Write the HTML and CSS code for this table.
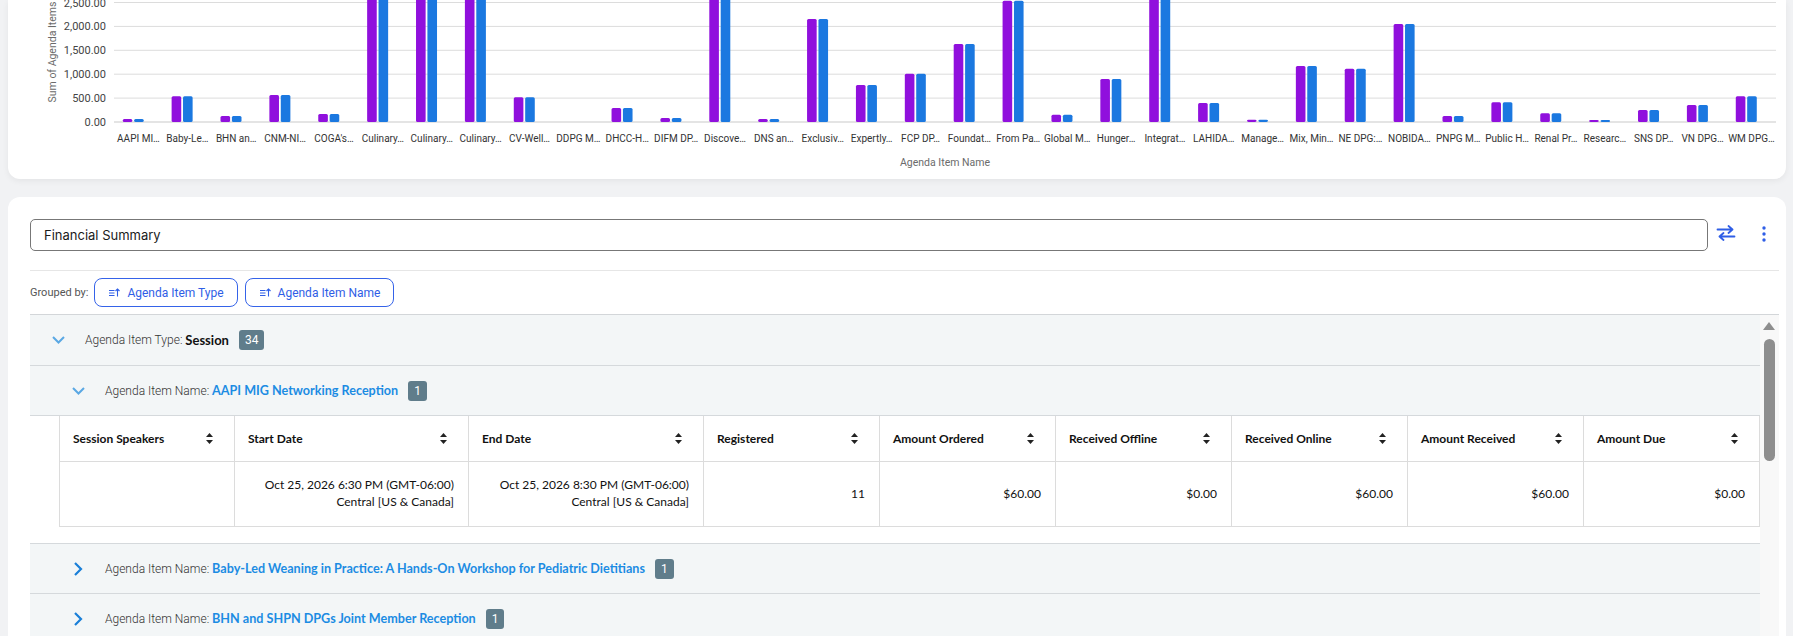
FILE: index.html
```html
<!DOCTYPE html>
<html lang="en">
<head>
<meta charset="utf-8">
<title>Financial Summary</title>
<link rel="stylesheet" href="styles.css">
</head>
<body>
<div class="chart-card">
  <svg class="chart" width="1778" height="179" viewBox="8 0 1778 179">
    <g class="grid-lines">
      <line x1="114" x2="1776" y1="2.5" y2="2.5"/>
      <line x1="114" x2="1776" y1="26.4" y2="26.4"/>
      <line x1="114" x2="1776" y1="50.3" y2="50.3"/>
      <line x1="114" x2="1776" y1="74.2" y2="74.2"/>
      <line x1="114" x2="1776" y1="98.1" y2="98.1"/>
      <line class="base" x1="114" x2="1776" y1="122" y2="122"/>
    </g>
    <g class="y-labels">
      <text x="106" y="6.5">2,500.00</text>
      <text x="106" y="30.4">2,000.00</text>
      <text x="106" y="54.3">1,500.00</text>
      <text x="106" y="78.2">1,000.00</text>
      <text x="106" y="102.1">500.00</text>
      <text x="106" y="126">0.00</text>
    </g>
    <text class="axis-title" transform="translate(56 52) rotate(-90)">Sum of Agenda Items</text>
    <text class="axis-title" x="945" y="165.5">Agenda Item Name</text>
    <g class="cats">
      <g transform="translate(138.44 0)"><rect class="b1" x="-15.7" y="119" width="9.6" height="3"/><rect class="b2" x="-4.3" y="119" width="9.6" height="3"/><text y="141.5">AAPI MI…</text></g>
      <g transform="translate(187.32 0)"><rect class="b1" x="-15.7" y="96.3" width="9.6" height="25.7"/><rect class="b2" x="-4.3" y="96.3" width="9.6" height="25.7"/><text y="141.5">Baby-Le…</text></g>
      <g transform="translate(236.20 0)"><rect class="b1" x="-15.7" y="116" width="9.6" height="6"/><rect class="b2" x="-4.3" y="116" width="9.6" height="6"/><text y="141.5">BHN an…</text></g>
      <g transform="translate(285.08 0)"><rect class="b1" x="-15.7" y="95" width="9.6" height="27"/><rect class="b2" x="-4.3" y="95" width="9.6" height="27"/><text y="141.5">CNM-NI…</text></g>
      <g transform="translate(333.96 0)"><rect class="b1" x="-15.7" y="114" width="9.6" height="8"/><rect class="b2" x="-4.3" y="114" width="9.6" height="8"/><text y="141.5">COGA's…</text></g>
      <g transform="translate(382.84 0)"><rect class="b1" x="-15.7" y="-10" width="9.6" height="132"/><rect class="b2" x="-4.3" y="-10" width="9.6" height="132"/><text y="141.5">Culinary…</text></g>
      <g transform="translate(431.72 0)"><rect class="b1" x="-15.7" y="-10" width="9.6" height="132"/><rect class="b2" x="-4.3" y="-10" width="9.6" height="132"/><text y="141.5">Culinary…</text></g>
      <g transform="translate(480.60 0)"><rect class="b1" x="-15.7" y="-10" width="9.6" height="132"/><rect class="b2" x="-4.3" y="-10" width="9.6" height="132"/><text y="141.5">Culinary…</text></g>
      <g transform="translate(529.48 0)"><rect class="b1" x="-15.7" y="97.3" width="9.6" height="24.7"/><rect class="b2" x="-4.3" y="97.3" width="9.6" height="24.7"/><text y="141.5">CV-Well…</text></g>
      <g transform="translate(578.36 0)"><text y="141.5">DDPG M…</text></g>
      <g transform="translate(627.24 0)"><rect class="b1" x="-15.7" y="108" width="9.6" height="14"/><rect class="b2" x="-4.3" y="108" width="9.6" height="14"/><text y="141.5">DHCC-H…</text></g>
      <g transform="translate(676.12 0)"><rect class="b1" x="-15.7" y="118" width="9.6" height="4"/><rect class="b2" x="-4.3" y="118" width="9.6" height="4"/><text y="141.5">DIFM DP…</text></g>
      <g transform="translate(725.00 0)"><rect class="b1" x="-15.7" y="-10" width="9.6" height="132"/><rect class="b2" x="-4.3" y="-10" width="9.6" height="132"/><text y="141.5">Discove…</text></g>
      <g transform="translate(773.88 0)"><rect class="b1" x="-15.7" y="119" width="9.6" height="3"/><rect class="b2" x="-4.3" y="119" width="9.6" height="3"/><text y="141.5">DNS an…</text></g>
      <g transform="translate(822.76 0)"><rect class="b1" x="-15.7" y="19" width="9.6" height="103"/><rect class="b2" x="-4.3" y="19" width="9.6" height="103"/><text y="141.5">Exclusiv…</text></g>
      <g transform="translate(871.64 0)"><rect class="b1" x="-15.7" y="85" width="9.6" height="37"/><rect class="b2" x="-4.3" y="85" width="9.6" height="37"/><text y="141.5">Expertly…</text></g>
      <g transform="translate(920.52 0)"><rect class="b1" x="-15.7" y="73.7" width="9.6" height="48.3"/><rect class="b2" x="-4.3" y="73.7" width="9.6" height="48.3"/><text y="141.5">FCP DP…</text></g>
      <g transform="translate(969.40 0)"><rect class="b1" x="-15.7" y="44" width="9.6" height="78"/><rect class="b2" x="-4.3" y="44" width="9.6" height="78"/><text y="141.5">Foundat…</text></g>
      <g transform="translate(1018.28 0)"><rect class="b1" x="-15.7" y="0.7" width="9.6" height="121.3"/><rect class="b2" x="-4.3" y="0.7" width="9.6" height="121.3"/><text y="141.5">From Pa…</text></g>
      <g transform="translate(1067.16 0)"><rect class="b1" x="-15.7" y="114.7" width="9.6" height="7.3"/><rect class="b2" x="-4.3" y="114.7" width="9.6" height="7.3"/><text y="141.5">Global M…</text></g>
      <g transform="translate(1116.04 0)"><rect class="b1" x="-15.7" y="79" width="9.6" height="43"/><rect class="b2" x="-4.3" y="79" width="9.6" height="43"/><text y="141.5">Hunger…</text></g>
      <g transform="translate(1164.92 0)"><rect class="b1" x="-15.7" y="-10" width="9.6" height="132"/><rect class="b2" x="-4.3" y="-10" width="9.6" height="132"/><text y="141.5">Integrat…</text></g>
      <g transform="translate(1213.80 0)"><rect class="b1" x="-15.7" y="103" width="9.6" height="19"/><rect class="b2" x="-4.3" y="103" width="9.6" height="19"/><text y="141.5">LAHIDA…</text></g>
      <g transform="translate(1262.68 0)"><rect class="b1" x="-15.7" y="119.7" width="9.6" height="2.3"/><rect class="b2" x="-4.3" y="119.7" width="9.6" height="2.3"/><text y="141.5">Manage…</text></g>
      <g transform="translate(1311.56 0)"><rect class="b1" x="-15.7" y="66" width="9.6" height="56"/><rect class="b2" x="-4.3" y="66" width="9.6" height="56"/><text y="141.5">Mix, Min…</text></g>
      <g transform="translate(1360.44 0)"><rect class="b1" x="-15.7" y="68.7" width="9.6" height="53.3"/><rect class="b2" x="-4.3" y="68.7" width="9.6" height="53.3"/><text y="141.5">NE DPG:…</text></g>
      <g transform="translate(1409.32 0)"><rect class="b1" x="-15.7" y="24" width="9.6" height="98"/><rect class="b2" x="-4.3" y="24" width="9.6" height="98"/><text y="141.5">NOBIDA…</text></g>
      <g transform="translate(1458.20 0)"><rect class="b1" x="-15.7" y="116" width="9.6" height="6"/><rect class="b2" x="-4.3" y="116" width="9.6" height="6"/><text y="141.5">PNPG M…</text></g>
      <g transform="translate(1507.08 0)"><rect class="b1" x="-15.7" y="102.3" width="9.6" height="19.7"/><rect class="b2" x="-4.3" y="102.3" width="9.6" height="19.7"/><text y="141.5">Public H…</text></g>
      <g transform="translate(1555.96 0)"><rect class="b1" x="-15.7" y="113.3" width="9.6" height="8.7"/><rect class="b2" x="-4.3" y="113.3" width="9.6" height="8.7"/><text y="141.5">Renal Pr…</text></g>
      <g transform="translate(1604.84 0)"><rect class="b1" x="-15.7" y="120" width="9.6" height="2"/><rect class="b2" x="-4.3" y="120" width="9.6" height="2"/><text y="141.5">Researc…</text></g>
      <g transform="translate(1653.72 0)"><rect class="b1" x="-15.7" y="110" width="9.6" height="12"/><rect class="b2" x="-4.3" y="110" width="9.6" height="12"/><text y="141.5">SNS DP…</text></g>
      <g transform="translate(1702.60 0)"><rect class="b1" x="-15.7" y="105" width="9.6" height="17"/><rect class="b2" x="-4.3" y="105" width="9.6" height="17"/><text y="141.5">VN DPG…</text></g>
      <g transform="translate(1751.48 0)"><rect class="b1" x="-15.7" y="96.3" width="9.6" height="25.7"/><rect class="b2" x="-4.3" y="96.3" width="9.6" height="25.7"/><text y="141.5">WM DPG…</text></g>
    </g>
  </svg>
</div>

<div class="report-card">
  <div class="toolbar">
    <div class="title-input">Financial Summary</div>
    <button class="icon-btn swap" type="button" aria-label="Swap">
      <svg width="20" height="16" viewBox="0 0 20 16"><path d="M1.5 4.5h15M12.5 1l4 3.5-4 3.5M18.5 11.5h-15M7.5 8l-4 3.5 4 3.5" fill="none" stroke="#2f5ee6" stroke-width="1.8" stroke-linecap="round" stroke-linejoin="round"/></svg>
    </button>
    <button class="icon-btn kebab" type="button" aria-label="More">
      <svg width="4" height="16" viewBox="0 0 4 16"><circle cx="2" cy="2" r="1.7"/><circle cx="2" cy="8" r="1.7"/><circle cx="2" cy="14" r="1.7"/></svg>
    </button>
  </div>
  <div class="divider"></div>
  <div class="grouped">
    <span class="grouped-label">Grouped by:</span>
    <span class="chip"><svg class="chip-icon" width="11" height="9" viewBox="0 0 11 9"><path d="M0 2.5h5.5M0 5h5.5M0 7.5h5.5M8.5 8.5V1M6.5 3l2-2 2 2" fill="none" stroke="#2f5ee6" stroke-width="1.1"/></svg>Agenda Item Type</span>
    <span class="chip"><svg class="chip-icon" width="11" height="9" viewBox="0 0 11 9"><path d="M0 2.5h5.5M0 5h5.5M0 7.5h5.5M8.5 8.5V1M6.5 3l2-2 2 2" fill="none" stroke="#2f5ee6" stroke-width="1.1"/></svg>Agenda Item Name</span>
  </div>

  <div class="grid">
    <div class="rows">
      <div class="grp lvl1">
        <svg class="chev" width="13" height="8" viewBox="0 0 13 8"><path d="M1 1l5.5 5.5L12 1" fill="none" stroke="#5aa8e4" stroke-width="2"/></svg>
        <span class="grp-label">Agenda Item Type: </span><span class="grp-value">Session</span>
        <span class="badge">34</span>
      </div>
      <div class="grp lvl2">
        <svg class="chev" width="13" height="8" viewBox="0 0 13 8"><path d="M1 1l5.5 5.5L12 1" fill="none" stroke="#5aa8e4" stroke-width="2"/></svg>
        <span class="grp-label">Agenda Item Name: </span><span class="grp-link">AAPI MIG Networking Reception</span>
        <span class="badge">1</span>
      </div>
      <table class="data">
        <colgroup>
          <col class="c-s"><col class="c-w"><col class="c-w2"><col class="c-n"><col class="c-n"><col class="c-n"><col class="c-n"><col class="c-n"><col class="c-n">
        </colgroup>
        <thead>
          <tr>
            <th><div class="th-in"><span>Session Speakers</span><svg width="7" height="11" viewBox="0 0 7 11"><path d="M3.5 0L7 4H0z M0 7h7L3.5 11z"/></svg></div></th>
            <th><div class="th-in"><span>Start Date</span><svg width="7" height="11" viewBox="0 0 7 11"><path d="M3.5 0L7 4H0z M0 7h7L3.5 11z"/></svg></div></th>
            <th><div class="th-in"><span>End Date</span><svg width="7" height="11" viewBox="0 0 7 11"><path d="M3.5 0L7 4H0z M0 7h7L3.5 11z"/></svg></div></th>
            <th><div class="th-in"><span>Registered</span><svg width="7" height="11" viewBox="0 0 7 11"><path d="M3.5 0L7 4H0z M0 7h7L3.5 11z"/></svg></div></th>
            <th><div class="th-in"><span>Amount Ordered</span><svg width="7" height="11" viewBox="0 0 7 11"><path d="M3.5 0L7 4H0z M0 7h7L3.5 11z"/></svg></div></th>
            <th><div class="th-in"><span>Received Offline</span><svg width="7" height="11" viewBox="0 0 7 11"><path d="M3.5 0L7 4H0z M0 7h7L3.5 11z"/></svg></div></th>
            <th><div class="th-in"><span>Received Online</span><svg width="7" height="11" viewBox="0 0 7 11"><path d="M3.5 0L7 4H0z M0 7h7L3.5 11z"/></svg></div></th>
            <th><div class="th-in"><span>Amount Received</span><svg width="7" height="11" viewBox="0 0 7 11"><path d="M3.5 0L7 4H0z M0 7h7L3.5 11z"/></svg></div></th>
            <th><div class="th-in"><span>Amount Due</span><svg width="7" height="11" viewBox="0 0 7 11"><path d="M3.5 0L7 4H0z M0 7h7L3.5 11z"/></svg></div></th>
          </tr>
        </thead>
        <tbody>
          <tr>
            <td></td>
            <td>Oct 25, 2026 6:30 PM (GMT-06:00)<br>Central [US &amp; Canada]</td>
            <td>Oct 25, 2026 8:30 PM (GMT-06:00)<br>Central [US &amp; Canada]</td>
            <td>11</td>
            <td>$60.00</td>
            <td>$0.00</td>
            <td>$60.00</td>
            <td>$60.00</td>
            <td>$0.00</td>
          </tr>
        </tbody>
      </table>
      <div class="grp lvl2 collapsed first">
        <svg class="chev" width="13" height="14" viewBox="0 0 13 14"><path d="M3 1l6 6-6 6" fill="none" stroke="#1a7fd8" stroke-width="2.2"/></svg>
        <span class="grp-label">Agenda Item Name: </span><span class="grp-link">Baby-Led Weaning in Practice: A Hands-On Workshop for Pediatric Dietitians</span>
        <span class="badge">1</span>
      </div>
      <div class="grp lvl2 collapsed">
        <svg class="chev" width="13" height="14" viewBox="0 0 13 14"><path d="M3 1l6 6-6 6" fill="none" stroke="#1a7fd8" stroke-width="2.2"/></svg>
        <span class="grp-label">Agenda Item Name: </span><span class="grp-link">BHN and SHPN DPGs Joint Member Reception</span>
        <span class="badge">1</span>
      </div>
      <div class="grp lvl2 collapsed">
        <svg class="chev" width="13" height="14" viewBox="0 0 13 14"><path d="M3 1l6 6-6 6" fill="none" stroke="#1a7fd8" stroke-width="2.2"/></svg>
        <span class="grp-label">Agenda Item Name: </span><span class="grp-link">CNM-NIDPG Networking Reception</span>
        <span class="badge">1</span>
      </div>
    </div>
    <div class="scrollbar">
      <span class="sb-up"></span>
      <span class="sb-thumb"></span>
    </div>
  </div>
</div>
</body>
</html>
```

FILE: styles.css
```css
html, body {
  margin: 0;
  height: 636px;
  overflow: hidden;
}

body {
  background: #f1f2f4;
  font-family: Roboto, "Liberation Sans", Arial, sans-serif;
  color: #222;
}

/* ---------- chart card ---------- */
.chart-card {
  margin: 0 7px 0 8px;
  height: 179px;
  background: #fff;
  border-radius: 0 0 12px 12px;
  box-shadow: 0 2px 6px rgba(0, 0, 0, 0.06);
  overflow: hidden;
}

.chart {
  display: block;
}

.grid-lines line {
  stroke: #dcdcdc;
  stroke-width: 1;
}

.grid-lines line.base {
  stroke: #c9c9c9;
}

.y-labels text {
  font-family: Roboto, "Liberation Sans", sans-serif;
  font-size: 11px;
  fill: #444;
  text-anchor: end;
}

.axis-title {
  font-family: Roboto, "Liberation Sans", sans-serif;
  font-size: 10.5px;
  fill: #6b6b6b;
  text-anchor: middle;
}

.cats text {
  font-family: Roboto, "Liberation Sans", sans-serif;
  font-size: 10px;
  fill: #333;
  text-anchor: middle;
}

.b1 {
  fill: #9010dd;
  rx: 1.5px;
}

.b2 {
  fill: #1b78e0;
  rx: 1.5px;
}

/* ---------- report card ---------- */
.report-card {
  margin: 18px 7px 0 8px;
  background: #fff;
  border-radius: 12px 12px 0 0;
  padding: 22px 7px 0 22px;
  height: 600px;
}

.toolbar {
  display: flex;
  align-items: center;
  height: 32px;
}

.title-input {
  flex: 1;
  height: 32px;
  box-sizing: border-box;
  border: 1px solid #777;
  border-radius: 5px;
  padding-left: 13px;
  font-family: Inter, Roboto, sans-serif;
  font-size: 13px;
  line-height: 30px;
  color: #1b1b1b;
}

.icon-btn {
  border: none;
  background: none;
  padding: 0;
  height: 32px;
  display: flex;
  align-items: center;
  justify-content: center;
  cursor: pointer;
}

.swap {
  width: 36px;
}

.swap svg {
  margin-top: -5px;
}

.kebab {
  width: 30px;
  margin-left: 5px;
}

.kebab svg {
  fill: #2f5ee6;
  margin-top: -3px;
}

.divider {
  margin-top: 19px;
  height: 1px;
  background: #e6e6e6;
}

.grouped {
  display: flex;
  align-items: center;
  gap: 7px;
  margin-top: 7px;
  height: 29px;
}

.grouped-label {
  font-size: 11px;
  color: #555;
  margin-right: -1px;
}

.chip {
  display: flex;
  align-items: center;
  gap: 7px;
  height: 29px;
  box-sizing: border-box;
  border: 1px solid #3563e9;
  border-radius: 8px;
  padding: 0 13px 0 14px;
  font-size: 12px;
  color: #2f5ee6;
}

.chip-icon {
  display: block;
}

/* ---------- grouped grid ---------- */
.grid {
  margin-top: 7px;
  border-top: 1px solid #d3d6d9;
  display: flex;
  height: 400px;
}

.rows {
  flex: 1;
  min-width: 0;
}

.scrollbar {
  width: 19px;
  background: #f8f8f8;
  position: relative;
}

.sb-up {
  position: absolute;
  left: 3px;
  top: 7px;
  width: 0;
  height: 0;
  border-left: 6.5px solid transparent;
  border-right: 6.5px solid transparent;
  border-bottom: 8px solid #8e8e8e;
}

.sb-thumb {
  position: absolute;
  left: 4px;
  top: 24px;
  width: 11px;
  height: 122px;
  border-radius: 6px;
  background: #8e8e8e;
}

.grp {
  display: flex;
  align-items: center;
  height: 49px;
  background: #f3f6f7;
  border-bottom: 1px solid #d5d9dc;
  font-size: 12px;
  white-space: nowrap;
}

.grp.lvl1 {
  height: 50px;
}

.grp .chev {
  display: block;
  flex: none;
  margin-right: 20px;
}

.lvl1 {
  padding-left: 22px;
}

.lvl2 {
  padding-left: 42px;
}

.collapsed.first {
  margin-top: 16px;
  border-top: 1px solid #d5d9dc;
}

.grp-label {
  font-weight: 300;
  color: #333;
  white-space: pre;
}

.grp-value {
  font-family: Lato, Roboto, sans-serif;
  font-weight: 700;
  font-size: 13px;
  color: #111;
}

.grp-link {
  font-family: Lato, Roboto, sans-serif;
  font-weight: 700;
  font-size: 12.6px;
  color: #1c8ce3;
}

.badge {
  display: inline-block;
  margin-left: 10px;
  height: 20px;
  line-height: 20px;
  padding: 0 6px;
  border-radius: 3px;
  background: #607d8b;
  color: #fff;
  font-size: 12px;
}

/* ---------- data table ---------- */
.data {
  margin-left: 29px;
  width: 1700px;
  table-layout: fixed;
  border-collapse: collapse;
  font-family: Lato, Roboto, sans-serif;
  font-size: 12px;
  color: #111;
}

.c-s { width: 175px; }
.c-w { width: 234px; }
.c-w2 { width: 235px; }
.c-n { width: 176px; }

.data th,
.data td {
  border: 1px solid #dcdcdc;
}

.data thead th {
  border-top: none;
  height: 45px;
  padding: 0 21px 0 13px;
  font-weight: 700;
  text-align: left;
}

.th-in {
  display: flex;
  align-items: center;
  justify-content: space-between;
}

.th-in svg {
  fill: #222;
  display: block;
}

.data td {
  height: 64px;
  padding: 0 14px 0 10px;
  text-align: right;
  vertical-align: middle;
  line-height: 16.7px;
}
```
